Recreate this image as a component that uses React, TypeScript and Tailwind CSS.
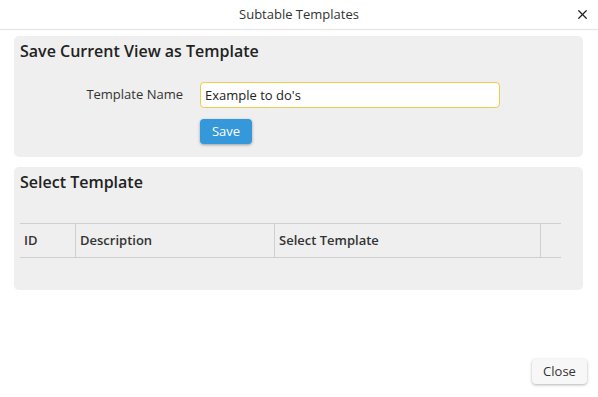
import { X } from 'lucide-react';

const columns = [
  { label: 'ID', width: 'w-[56px]' },
  { label: 'Description', width: 'w-[199px]' },
  { label: 'Select Template', width: 'w-[266px]' },
  { label: '', width: 'flex-1' },
];

export default function App() {
  return (
    <div className="h-[397px] w-[598px] bg-white font-['Open_Sans',sans-serif] text-[#333]">
      <header className="relative flex h-[30px] items-center justify-center border-b border-[#e3e3e3]">
        <h1 className="text-[13px] font-medium text-[#333]">Subtable Templates</h1>
        <button type="button" className="absolute right-[8px] top-[7px] text-[#222]">
          <X className="h-[15px] w-[15px]" strokeWidth={2} />
        </button>
      </header>

      <div className="flex flex-col gap-[10px] pl-[14px] pr-[15px] pt-[6px]">
        <section className="h-[121px] rounded-[5px] bg-[#efefef] px-[6px] pt-[3px]">
          <h2 className="text-[16px] font-semibold leading-[24px] text-[#222]">Save Current View as Template</h2>
          <div className="mt-[19px] flex items-center">
            <label className="w-[180px] pr-[17px] text-right text-[13px]">Template Name</label>
            <input
              defaultValue="Example to do's"
              className="h-[26px] w-[300px] rounded-[4px] border border-[#f2cc4c] bg-white px-[4px] text-[13px] text-[#222] outline-none"
            />
          </div>
          <div className="mt-[10px] pl-[180px]">
            <button
              type="button"
              className="h-[25px] w-[52px] rounded-[4px] bg-[#3498db] text-[13px] text-white shadow-[0_1px_3px_rgba(0,0,0,0.35)]"
            >
              Save
            </button>
          </div>
        </section>

        <section className="h-[123px] rounded-[5px] bg-[#efefef] px-[6px] pt-[3px]">
          <h2 className="text-[16px] font-semibold leading-[24px] text-[#222]">Select Template</h2>
          <div className="mr-[16px] mt-[29px] flex h-[35px] border-y border-[#cfcfcf]">
            {columns.map((c, i) => (
              <div
                key={i}
                className={`${c.width} flex items-center px-[4px] text-[13px] font-semibold text-[#333] ${
                  i < columns.length - 1 ? 'border-r border-[#cfcfcf]' : ''
                }`}
              >
                {c.label}
              </div>
            ))}
          </div>
        </section>
      </div>

      <div className="flex justify-end pr-[11px] pt-[69px]">
        <button
          type="button"
          className="h-[25px] w-[55px] rounded-[4px] bg-[#f7f7f7] text-[13px] text-[#333] shadow-[0_1px_3px_rgba(0,0,0,0.3)]"
        >
          Close
        </button>
      </div>
    </div>
  );
}
